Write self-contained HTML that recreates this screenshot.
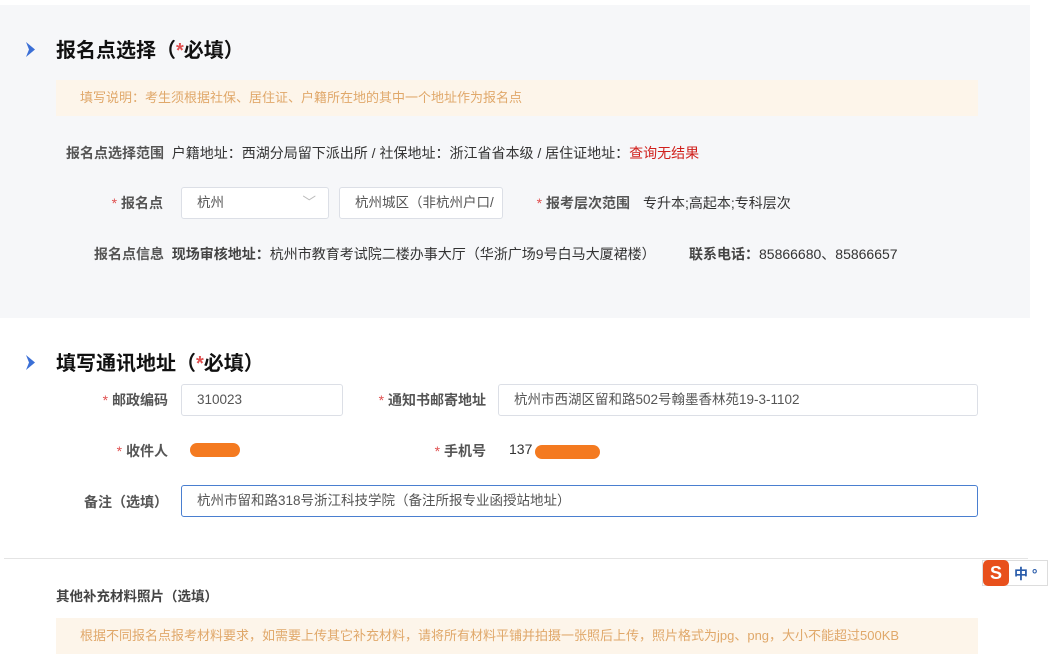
<!DOCTYPE html>
<html><head><meta charset="utf-8"><style>
*{margin:0;padding:0;box-sizing:border-box}
body{width:1048px;height:654px;overflow:hidden;background:#fff;font-family:"Liberation Sans","Noto Sans CJK SC",sans-serif;color:#333;font-size:14px;position:relative}
.abs{position:absolute;white-space:nowrap}
.sec1{position:absolute;left:0;top:5px;width:1030px;height:313px;background:#f6f7f9}
.sec2{position:absolute;left:4px;top:318px;width:1024px;height:240px;background:#fff}
.h{font-size:20px;font-weight:bold;color:#111}
.arrow{position:absolute;width:11px;height:15px}
.note{position:absolute;background:#fdf5ea;color:#e0a86a;font-size:13px;padding-left:24px;line-height:36px}
.lab{color:#555;font-weight:bold;text-align:right}
.red{color:#e05050}
.inp{position:absolute;background:#fff;border:1px solid #dcdfe6;border-radius:3px;color:#555;padding-left:15px;font-size:13.5px;overflow:hidden;white-space:nowrap}
</style></head><body>
<div class="sec1"></div>
<div class="sec2"></div>
<div class="abs" style="left:4px;top:558px;width:1024px;height:1px;background:#e4e4e4"></div>

<svg class="arrow" style="left:25px;top:42px" viewBox="0 0 11 15"><path d="M1 0L10 7.5L1 15L4 7.5Z" fill="#3b6fd6"/></svg>
<div class="abs h" style="left:56px;top:34px">报名点选择（<span class="red">*</span>必填）</div>
<div class="note" style="left:56px;top:80px;width:922px;height:36px">填写说明：考生须根据社保、居住证、户籍所在地的其中一个地址作为报名点</div>

<div class="abs" style="left:66px;top:143px"><span class="lab">报名点选择范围</span>&nbsp;&nbsp;户籍地址：西湖分局留下派出所 / 社保地址：浙江省省本级 / 居住证地址：<span style="color:#d0201c">查询无结果</span></div>

<div class="abs lab" style="right:885px;top:193px"><span class="red" style="font-weight:normal">* </span>报名点</div>
<div class="inp" style="left:181px;top:187px;width:148px;height:32px;line-height:30px">杭州<span style="position:absolute;right:12px;top:0;color:#bbb">﹀</span></div>
<div class="inp" style="left:339px;top:187px;width:164px;height:32px;line-height:30px;padding-right:6px">杭州城区（非杭州户口/</div>
<div class="abs lab" style="right:418px;top:193px"><span class="red" style="font-weight:normal">* </span>报考层次范围</div>
<div class="abs" style="left:643px;top:193px">专升本;高起本;专科层次</div>

<div class="abs" style="left:94px;top:244px"><span class="lab">报名点信息</span>&nbsp;&nbsp;<b style="color:#444">现场审核地址：</b>杭州市教育考试院二楼办事大厅（华浙广场9号白马大厦裙楼）</div>
<div class="abs" style="left:689px;top:244px"><b style="color:#444">联系电话：</b>85866680、85866657</div>

<svg class="arrow" style="left:25px;top:355px" viewBox="0 0 11 15"><path d="M1 0L10 7.5L1 15L4 7.5Z" fill="#3b6fd6"/></svg>
<div class="abs h" style="left:56px;top:347px">填写通讯地址（<span class="red">*</span>必填）</div>

<div class="abs lab" style="right:880px;top:390px"><span class="red" style="font-weight:normal">* </span>邮政编码</div>
<div class="inp" style="left:181px;top:384px;width:162px;height:32px;line-height:30px">310023</div>
<div class="abs lab" style="right:562px;top:390px"><span class="red" style="font-weight:normal">* </span>通知书邮寄地址</div>
<div class="inp" style="left:498px;top:384px;width:480px;height:32px;line-height:30px">杭州市西湖区留和路502号翰墨香林苑19-3-1102</div>

<div class="abs lab" style="right:880px;top:441px"><span class="red" style="font-weight:normal">* </span>收件人</div>
<div class="abs" style="left:190px;top:443px;width:50px;height:14px;background:#f47a20;border-radius:7px"></div>
<div class="abs lab" style="right:562px;top:441px"><span class="red" style="font-weight:normal">* </span>手机号</div>
<div class="abs" style="left:509px;top:441px">137</div>
<div class="abs" style="left:535px;top:445px;width:65px;height:14px;background:#f47a20;border-radius:7px"></div>

<div class="abs lab" style="right:880px;top:492px">备注（选填）</div>
<div class="inp" style="left:181px;top:485px;width:797px;height:32px;line-height:30px;border-color:#4a7fd0">杭州市留和路318号浙江科技学院（备注所报专业函授站地址）</div>

<div class="abs" style="left:56px;top:585px;font-weight:bold;color:#444;font-size:13.5px">其他补充材料照片（选填）</div>
<div class="note" style="left:56px;top:618px;width:922px;height:36px">根据不同报名点报考材料要求，如需要上传其它补充材料，请将所有材料平铺并拍摄一张照后上传，照片格式为jpg、png，大小不能超过500KB</div>

<div class="abs" style="left:982px;top:560px;width:66px;height:26px;background:#fff;border:1px solid #ddd"></div>
<div class="abs" style="left:983px;top:560px;width:26px;height:26px;background:#e8501c;border-radius:5px;color:#fff;font-weight:bold;font-size:18px;text-align:center;line-height:26px">S</div>
<div class="abs" style="left:1014px;top:564px;color:#2a5caa;font-weight:bold;font-size:14px">中 °</div>
</body></html>
